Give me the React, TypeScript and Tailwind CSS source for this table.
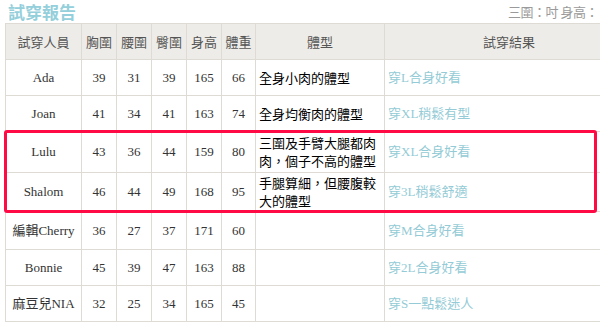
import React from "react";

const rows = [
  { name: "Ada", b: 39, w: 31, h: 39, ht: 165, wt: 66, type: "全身小肉的體型", result: "穿L合身好看", height: "h-[36px]" },
  { name: "Joan", b: 41, w: 34, h: 41, ht: 163, wt: 74, type: "全身均衡肉的體型", result: "穿XL稍鬆有型", height: "h-[36px]" },
  { name: "Lulu", b: 43, w: 36, h: 44, ht: 159, wt: 80, type: "三圍及手臂大腿都肉肉，個子不高的體型", result: "穿XL合身好看", height: "h-[41px]" },
  { name: "Shalom", b: 46, w: 44, h: 49, ht: 168, wt: 95, type: "手腿算細，但腰腹較大的體型", result: "穿3L稍鬆舒適", height: "h-[39px]" },
  { name: "編輯Cherry", b: 36, w: 27, h: 37, ht: 171, wt: 60, type: "", result: "穿M合身好看", height: "h-[38px]" },
  { name: "Bonnie", b: 45, w: 39, h: 47, ht: 163, wt: 88, type: "", result: "穿2L合身好看", height: "h-[36px]" },
  { name: "麻豆兒NIA", b: 32, w: 25, h: 34, ht: 165, wt: 45, type: "", result: "穿S一點鬆迷人", height: "h-[36px]" },
];

const font = "font-['Liberation_Serif','Noto_Sans_CJK_TC',serif]";
const cell = "border border-[#dedad4] text-[13px] p-0";

export default function App() {
  return (
    <main className={`w-[600px] h-[325px] overflow-hidden bg-white relative ${font}`}>
      <div className="flex items-start justify-between h-[23px] pl-[8px] pr-[2px]">
        <h1 className="text-[17px] leading-[22px] pt-[1px] font-bold text-[#94cfdb] font-['Noto_Sans_CJK_TC',sans-serif]">
          試穿報告
        </h1>
        <p className="text-[13px] leading-[16px] text-[#9a9a9a] mt-[4px] tracking-[-0.5px] font-['Noto_Sans_CJK_TC',sans-serif]">
          三圍：吋 身高：
        </p>
      </div>

      <table className="ml-[5px] border-collapse table-fixed w-[640px]">
        <colgroup>
          <col className="w-[76px]" />
          <col className="w-[35px]" />
          <col className="w-[35px]" />
          <col className="w-[35px]" />
          <col className="w-[35px]" />
          <col className="w-[34px]" />
          <col className="w-[129px]" />
          <col />
        </colgroup>
        <thead>
          <tr className="h-[36px] bg-[#eeece8] text-[#555] font-['Noto_Sans_CJK_TC',sans-serif]">
            <th className={`${cell} font-normal`}>試穿人員</th>
            <th className={`${cell} font-normal`}>胸圍</th>
            <th className={`${cell} font-normal`}>腰圍</th>
            <th className={`${cell} font-normal`}>臀圍</th>
            <th className={`${cell} font-normal`}>身高</th>
            <th className={`${cell} font-normal`}>體重</th>
            <th className={`${cell} font-normal`}>體型</th>
            <th className={`${cell} font-normal text-left pl-[98px]`}>試穿結果</th>
          </tr>
        </thead>
        <tbody>
          {rows.map((r) => (
            <tr key={r.name} className={r.height}>
              <td className={`${cell} text-center text-[#333]`}>{r.name}</td>
              <td className={`${cell} text-center text-[#333]`}>{r.b}</td>
              <td className={`${cell} text-center text-[#333]`}>{r.w}</td>
              <td className={`${cell} text-center text-[#333]`}>{r.h}</td>
              <td className={`${cell} text-center text-[#333]`}>{r.ht}</td>
              <td className={`${cell} text-center text-[#333]`}>{r.wt}</td>
              <td className={`${cell} px-[3px] leading-[18px] text-black font-['Noto_Sans_CJK_TC',sans-serif]`}>{r.type}</td>
              <td className={`${cell} pl-[3px] text-[#94cbd6]`}>{r.result}</td>
            </tr>
          ))}
        </tbody>
      </table>

      {/* red highlight around Lulu and Shalom */}
      <div className="absolute left-[4px] top-[130px] w-[593px] h-[83px] border-[3px] border-[#ff0a45] rounded-[3px] pointer-events-none" />
    </main>
  );
}
